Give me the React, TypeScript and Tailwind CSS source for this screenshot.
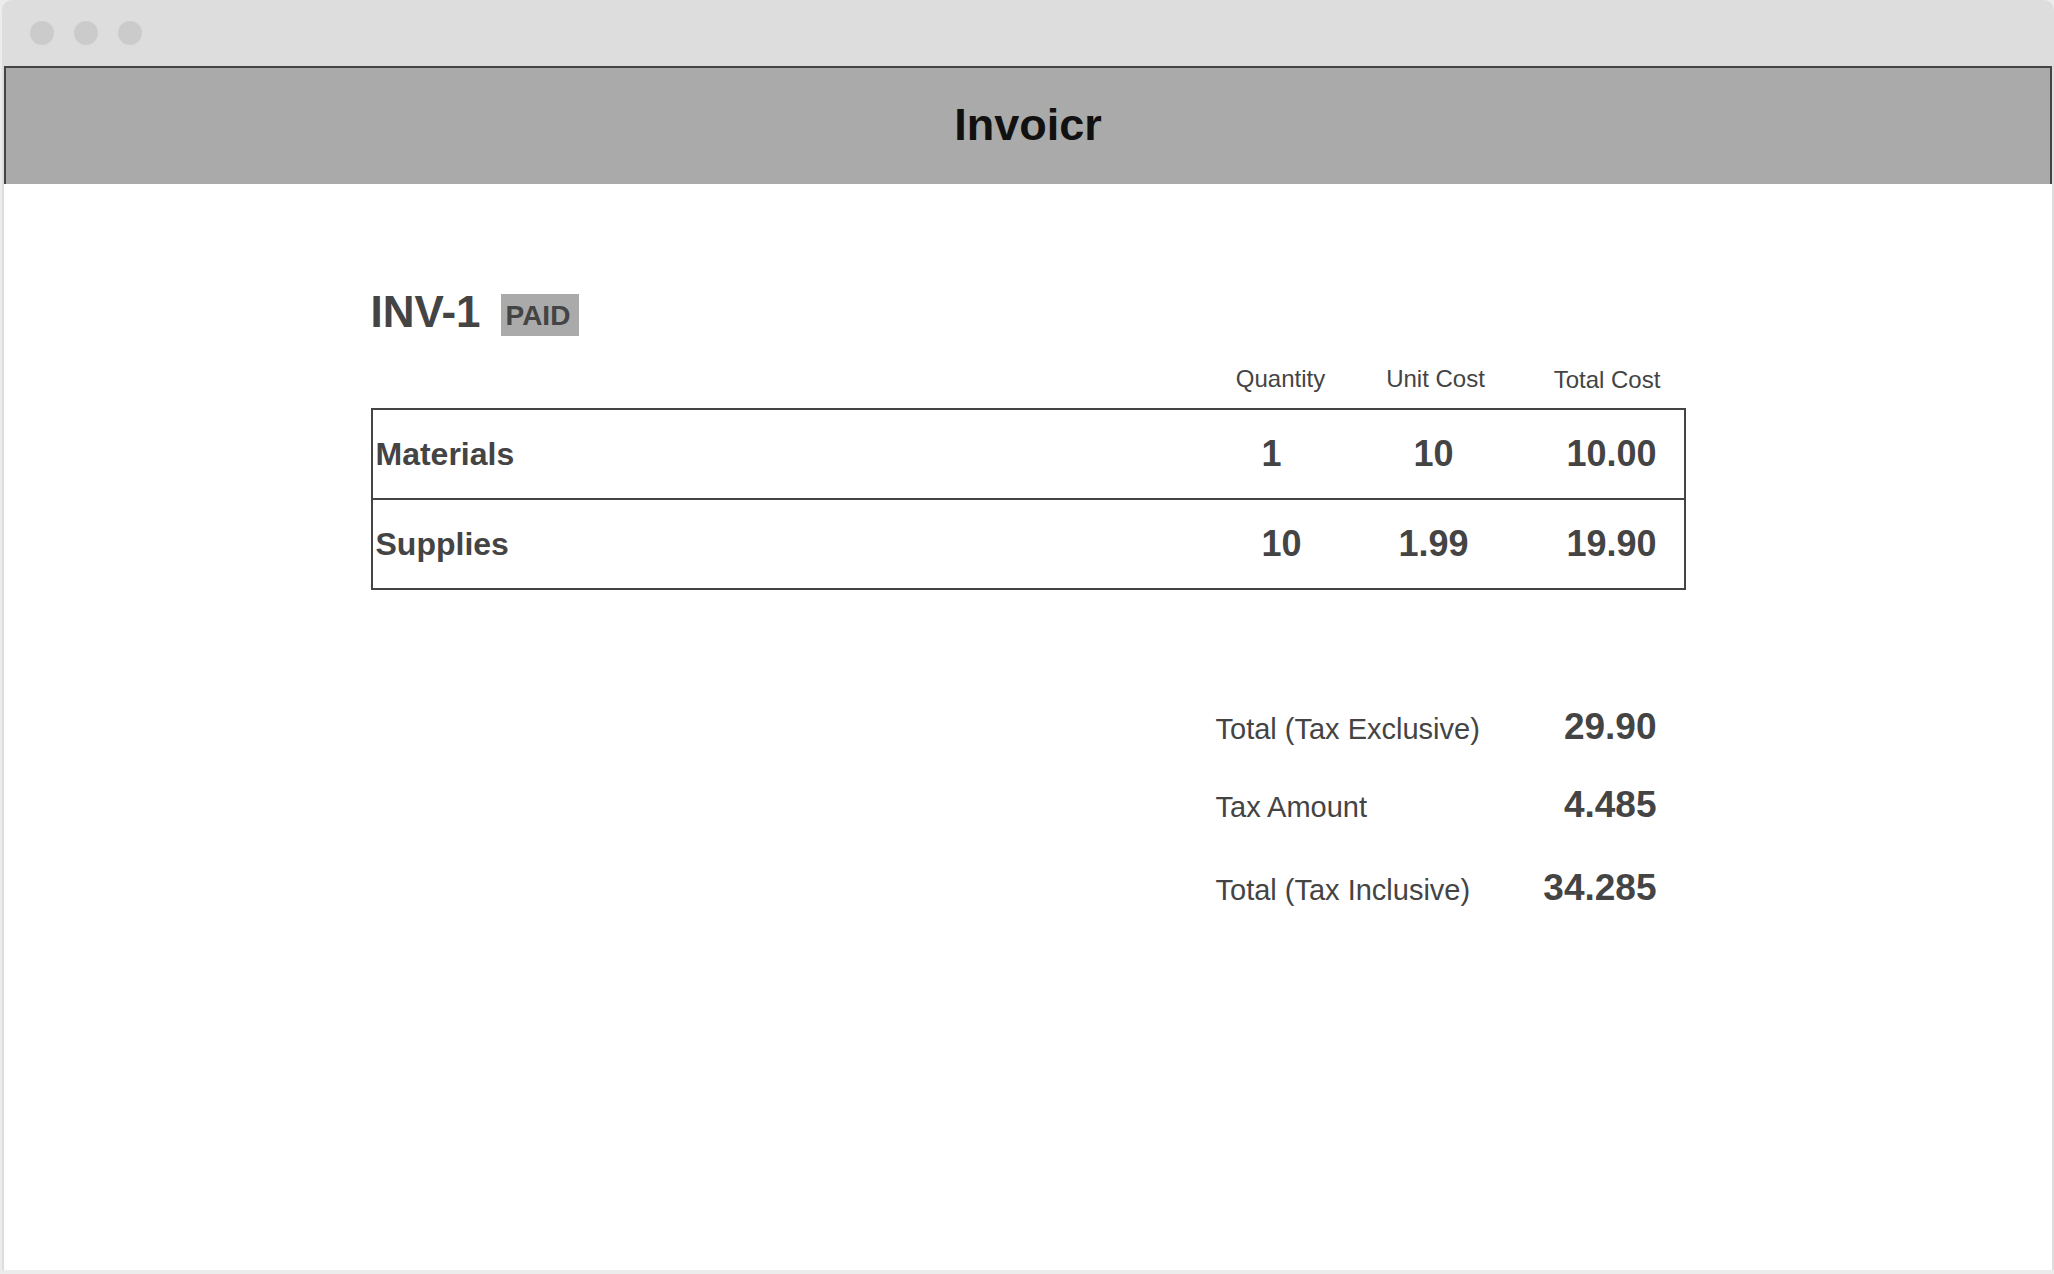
import React from "react";

// ─── Data ────────────────────────────────────────────────────────────────────

interface LineItem {
  name: string;
  quantity: string;
  unitCost: string;
  total: string;
}

const items: LineItem[] = [
  { name: "Materials", quantity: "1", unitCost: "10", total: "10.00" },
  { name: "Supplies", quantity: "10", unitCost: "1.99", total: "19.90" },
];

const totals = [
  { label: "Total (Tax Exclusive)", value: "29.90", gap: "mt-0" },
  { label: "Tax Amount", value: "4.485", gap: "mt-[41px]" },
  { label: "Total (Tax Inclusive)", value: "34.285", gap: "mt-[46px]" },
];

// shared column layout for header + rows
const cols = "grid grid-cols-[1fr_120px_190px_153px]";

// ─── Window chrome ───────────────────────────────────────────────────────────

function TitleBar() {
  return (
    <div className="flex h-[66px] items-center gap-[20px] pl-[26px]">
      <span className="h-[24px] w-[24px] rounded-full bg-[#cbcbcb]" />
      <span className="h-[24px] w-[24px] rounded-full bg-[#cbcbcb]" />
      <span className="h-[24px] w-[24px] rounded-full bg-[#cbcbcb]" />
    </div>
  );
}

// ─── App ─────────────────────────────────────────────────────────────────────

export default function App() {
  return (
    <div
      className="h-[1274px] w-[2054px] bg-[#ececec] pl-[2px]"
      style={{ fontFamily: '"Liberation Sans", Arial, sans-serif' }}
    >
      <div className="flex h-[1270px] w-[2052px] flex-col rounded-t-[10px] bg-[#dddddd] pl-[2px] pr-[2px]">
        <TitleBar />

        {/* header */}
        <header className="flex h-[118px] items-center justify-center border-x-2 border-t-2 border-[#444444] bg-[#aaaaaa] pb-[3px]">
          <h1 className="text-[45px] font-bold leading-none text-[#111111]">Invoicr</h1>
        </header>

        {/* body */}
        <main className="flex-1 bg-white text-[#444444]">
          <div className="mx-auto w-[1315px] pt-[106px]">
            {/* invoice id + status */}
            <div className="flex items-start gap-[20px]">
              <h2 className="h-[44px] text-[44px] font-bold leading-none">INV-1</h2>
              <span className="mt-[4px] h-[42px] w-[78px] bg-[#aaaaaa] pl-[5px] pt-[8px] text-[28px] font-bold leading-none">
                PAID
              </span>
            </div>

            {/* column headers */}
            <div className={`${cols} mt-[31px] h-[24px] px-[2px] text-[24px] leading-none`}>
              <span />
              <span className="text-center">Quantity</span>
              <span className="text-center">Unit Cost</span>
              <span className="mt-[1px] text-center">Total Cost</span>
            </div>

            {/* line items */}
            <div className="mt-[17px] border-2 border-[#444444]">
              {items.map((item, i) => (
                <div
                  key={item.name}
                  className={`${cols} items-center leading-none ${i > 0 ? "h-[90px] border-t-2 border-[#444444]" : "h-[88px]"}`}
                >
                  <span className="pl-[3px] text-[32px] font-bold">{item.name}</span>
                  <span className="pl-[41px] text-[36px] font-bold">{item.quantity}</span>
                  <span className="pr-[4px] text-center text-[36px] font-bold">{item.unitCost}</span>
                  <span className="pr-[27px] text-right text-[36px] font-bold">{item.total}</span>
                </div>
              ))}
            </div>

            {/* totals */}
            <div className="mt-[118px] flex justify-end pr-[29px]">
              <div className="w-[441px]">
                {totals.map((t) => (
                  <div
                    key={t.label}
                    className={`flex items-baseline justify-between leading-none ${t.gap}`}
                  >
                    <span className="text-[29px]">{t.label}</span>
                    <span className="text-[37px] font-bold">{t.value}</span>
                  </div>
                ))}
              </div>
            </div>
          </div>
        </main>
      </div>
    </div>
  );
}
